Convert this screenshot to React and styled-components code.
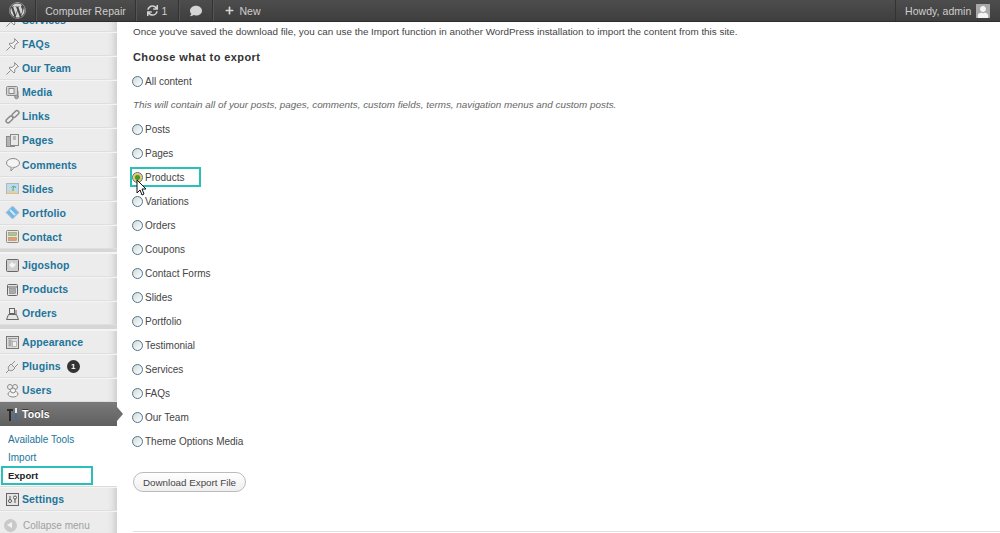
import styled, { createGlobalStyle } from 'styled-components';
import { FaWordpress, FaSync, FaComment, FaPlus, FaUser } from 'react-icons/fa';

const GlobalStyle = createGlobalStyle`
  html, body {
    margin: 0;
    padding: 0;
    height: 533px;
    overflow: hidden;
    background: #fff;
    font-family: "Liberation Sans", Arial, sans-serif;
  }
`;

const Page = styled.div`
  display: flex;
  flex-direction: column;
  width: 1000px;
  height: 533px;
  overflow: hidden;
`;

const AdminBar = styled.header`
  display: flex;
  flex: 0 0 22px;
  height: 22px;
  background: linear-gradient(#4d4d4d, #3e3e3e);
  color: #cfcfcf;
  font-size: 10.5px;
  letter-spacing: 0.05px;
  position: relative;
  z-index: 3;
  border-bottom: 1px solid #2c2c2c;
  box-sizing: border-box;
`;

const BarItem = styled.div`
  display: flex;
  align-items: center;
  justify-content: center;
  gap: ${({ $gap }) => $gap || 0}px;
  width: ${({ $w }) => $w}px;
  box-sizing: border-box;
  white-space: nowrap;
  border-right: ${({ $last }) => ($last ? '0' : '1px solid #333')};
  box-shadow: ${({ $last }) => ($last ? 'none' : '1px 0 0 #555')};
  svg { color: #d4d4d4; }
`;

const BarSpacer = styled.div`
  flex: 1;
`;

const BarAccount = styled.div`
  display: flex;
  align-items: center;
  gap: 5px;
  padding: 0 0 0 9px;
  width: 105px;
  box-sizing: border-box;
  white-space: nowrap;
  border-left: 1px solid #333;
`;

const Avatar = styled.div`
  display: flex;
  align-items: flex-end;
  justify-content: center;
  width: 14px;
  height: 14px;
  background: #a8a8a8;
  overflow: hidden;
  svg { color: #f4f4f4; }
`;

const Body = styled.div`
  display: flex;
  flex: 1;
  min-height: 0;
`;

const Sidebar = styled.nav`
  flex: 0 0 117px;
  width: 117px;
  background: #ececec;
  box-shadow: inset -8px 0 6px -5px #cccccc;
  position: relative;
  z-index: 1;
`;

const MenuRow = styled.div`
  display: flex;
  align-items: center;
  height: 24.05px;
  box-sizing: border-box;
  border-top: 1px solid #f4f4f4;
  border-bottom: 1px solid #dedede;
  padding-left: 5px;
  gap: 2px;
  font-size: 10.5px;
  font-weight: bold;
  letter-spacing: 0.1px;
  color: #21759b;
  white-space: nowrap;
  svg { flex: 0 0 15px; }
`;

const ClippedRow = styled(MenuRow)`
  margin-top: -13.8px;
`;

const ActiveRow = styled(MenuRow)`
  background: linear-gradient(#7a7a7a, #5f5f5f);
  color: #fff;
  text-shadow: 0 -1px 0 #3a3a3a;
  border: 0;
  height: 24px;
  width: 117px;
  position: relative;
  &::after {
    content: '';
    position: absolute;
    left: 117px;
    top: 5px;
    border-left: 6px solid #6d6d6d;
    border-top: 7px solid transparent;
    border-bottom: 7px solid transparent;
  }
`;

const Separator = styled.div`
  height: 3.6px;
  background: #d6d6d6;
  border-bottom: 1px solid #f4f4f4;
`;

const Badge = styled.span`
  display: inline-flex;
  align-items: center;
  justify-content: center;
  width: 13px;
  height: 13px;
  margin-left: 4px;
  border-radius: 50%;
  background: #333;
  color: #fff;
  font-size: 8px;
  letter-spacing: 0;
`;

const SubMenu = styled.div`
  display: flex;
  flex-direction: column;
  padding: 5px 0 1px;
  background: #fff;
  border-bottom: 1px solid #dcdcdc;
`;

const SubItem = styled.div`
  position: relative;
  height: 18px;
  line-height: 18px;
  padding-left: 8px;
  color: ${({ $current }) => ($current ? '#222' : '#21759b')};
  font-size: ${({ $current }) => ($current ? '9.5px' : '10px')};
  font-weight: ${({ $current }) => ($current ? 'bold' : 'normal')};
  ${({ $current }) =>
    $current &&
    `&::after {
      content: '';
      position: absolute;
      left: 1px;
      top: -1px;
      width: 92px;
      height: 19px;
      box-sizing: border-box;
      border: 2px solid #2ac0ba;
    }`}
`;

const CollapseRow = styled(MenuRow)`
  color: #a0a0a0;
  font-weight: normal;
  font-size: 10px;
  letter-spacing: 0;
  border-bottom: 0;
  gap: 6px;
  height: 27px;
  padding-left: 4px;
`;

const CollapseDot = styled.span`
  display: flex;
  align-items: center;
  justify-content: center;
  width: 13px;
  height: 13px;
  border-radius: 50%;
  background: #c9c9c9;
  &::before {
    content: '';
    border-right: 5px solid #f3f3f3;
    border-top: 3px solid transparent;
    border-bottom: 3px solid transparent;
    margin-left: -2px;
  }
`;

const Main = styled.main`
  flex: 1;
  padding: 4px 0 0 16px;
  color: #444;
  font-size: 10px;
  display: flex;
  flex-direction: column;
  min-width: 0;
`;

const Intro = styled.p`
  margin: 0;
  height: 12px;
  line-height: 12px;
  font-size: 9.87px;
  white-space: nowrap;
`;

const Heading = styled.h3`
  margin: 12px 0 5px;
  height: 14px;
  line-height: 14px;
  font-size: 11px;
  letter-spacing: 0.42px;
  font-weight: bold;
  color: #333;
`;

const Options = styled.div`
  display: flex;
  flex-direction: column;
  flex-shrink: 0;
`;

const Option = styled.label`
  position: relative;
  display: flex;
  align-items: center;
  gap: 2px;
  height: 24px;
  width: max-content;
  flex-shrink: 0;
  ${({ $marked }) =>
    $marked &&
    `&::after {
      content: '';
      position: absolute;
      left: -3px;
      top: 2px;
      width: 71px;
      height: 20px;
      box-sizing: border-box;
      border: 2px solid #2ac0ba;
    }`}
`;

const Radio = styled.span`
  box-sizing: border-box;
  width: 11px;
  height: 11px;
  margin-left: -1px;
  border-radius: 50%;
  border: 1px solid #44779f;
  background: ${({ $on }) =>
    $on ? 'radial-gradient(circle, #3e9a2c 0 2px, #f0c050 3px, #f7dd94 5px)' : 'linear-gradient(135deg, #d8d8d0, #fff)'};
`;

const Note = styled.p`
  margin: 0;
  height: 24px;
  line-height: 24px;
  font-style: italic;
  color: #666;
  font-size: 9.87px;
  white-space: nowrap;
`;

const Cursor = styled.svg`
  position: absolute;
  left: 3px;
  top: 14px;
  z-index: 2;
`;

const DownloadButton = styled.button`
  align-self: flex-start;
  flex-shrink: 0;
  margin-top: 19px;
  width: 113px;
  height: 20px;
  padding: 0;
  border: 1px solid #bbb;
  border-radius: 11px;
  background: linear-gradient(#fff, #efefef);
  color: #464646;
  font-family: inherit;
  font-size: 9.8px;
`;

const Rule = styled.hr`
  flex-shrink: 0;
  margin: 39px 0 0;
  width: 867px;
  border: 0;
  border-top: 1px solid #dfdfdf;
`;

const g = { fill: '#d4d4d4', stroke: '#8a8a8a', strokeWidth: 1 };

const icons = {
  pin: (
    <g fill="#f2f2f2" stroke="#8f8f8f">
      <path d="M9.500 1.500l4 4-1.500.5-2.500 3 .5 2-1 1-5-5 1-1 2 .5 3-2.500z" />
      <path d="M5.500 9.500L1.500 13.500" fill="none" />
    </g>
  ),
  media: (
    <g {...g}>
      <rect x="1.5" y="1.5" width="11" height="9" rx="1" />
      <rect x="4" y="3.500" width="5" height="5" fill="#efefef" />
      <circle cx="11.500" cy="12" r="1.800" fill="#aaa" />
      <path d="M13 12V6" fill="none" />
    </g>
  ),
  link: (
    <g fill="none" stroke="#8a8a8a" strokeWidth="1.5">
      <rect x="0.500" y="8.500" width="8" height="4" rx="2" transform="rotate(-45 4.500 10.500)" />
      <rect x="6.500" y="3" width="8" height="4" rx="2" transform="rotate(-45 10.500 5)" />
    </g>
  ),
  pages: (
    <g {...g}>
      <rect x="1.5" y="3.5" width="8" height="10" fill="#b4b4b4" />
      <rect x="5.5" y="1.5" width="8" height="11" fill="#e8e8e8" />
      <path d="M8 4h3M8 6h3" />
    </g>
  ),
  comment: (
    <g {...g}>
      <ellipse cx="8" cy="6" rx="6.500" ry="4.500" fill="#f4f4f4" />
      <path d="M6 10.500v3.500l3-3.500" fill="#f4f4f4" />
    </g>
  ),
  slides: (
    <g>
      <rect x="1.5" y="2.5" width="12" height="10" fill="#b8dcf2" stroke="#b5b5b5" />
      <path d="M2 12.500v-2l4-1 7 2v1z" fill="#e8cf90" />
      <path d="M8 10c0-2 0-3 1-4M6.500 6.500c1-1.500 3-1.500 4.500 0" fill="none" stroke="#5a9a4c" />
    </g>
  ),
  portfolio: (
    <g>
      <path d="M7.500 1l6.500 6.500-6.500 6.500L1 7.500z" fill="#6db8e8" stroke="#c0c0c0" />
      <path d="M5 5l5 5" stroke="#cfe9f9" strokeWidth="2" />
    </g>
  ),
  contact: (
    <g>
      <rect x="1.5" y="1.5" width="12" height="12" rx="1" fill="#eee8d0" stroke="#8a8a8a" />
      <rect x="3.5" y="3.5" width="8" height="3" fill="#a9c98c" stroke="#8a8a8a" strokeWidth=".5" />
      <rect x="3.5" y="8.5" width="8" height="3" fill="#e89a70" stroke="#8a8a8a" strokeWidth=".5" />
    </g>
  ),
  jigoshop: (
    <g>
      <rect x="1.5" y="1.5" width="12" height="12" rx="1" fill="#cfcfcf" stroke="#666" />
      <path d="M4 7l3-3 2 2 2-1-1 3-3 2z" fill="#f4f4f4" />
    </g>
  ),
  products: (
    <g>
      <rect x="2.5" y="2.5" width="10" height="11" rx="1" fill="#e4e4e4" stroke="#666" />
      <rect x="4.5" y="6.5" width="6" height="5" fill="#aaa" stroke="#777" strokeWidth=".5" />
      <path d="M3 5h9" stroke="#666" />
    </g>
  ),
  orders: (
    <g>
      <path d="M1.5 13.500l2-5h8l2 5z" fill="#e6e6e6" stroke="#666" />
      <rect x="4.5" y="2.5" width="5" height="5" fill="#eee" stroke="#666" />
      <path d="M11 4v4" stroke="#666" />
    </g>
  ),
  appearance: (
    <g>
      <rect x="1.5" y="1.5" width="12" height="12" fill="#dcdcdc" stroke="#777" />
      <rect x="3.5" y="4.5" width="3" height="7" fill="#aaa" />
      <rect x="7.5" y="6.5" width="4" height="5" fill="#f2f2f2" stroke="#888" strokeWidth=".5" />
      <path d="M3 3.500h9" stroke="#999" />
    </g>
  ),
  plugin: (
    <g fill="#e6e6e6" stroke="#8f8f8f">
      <path d="M6 5l4 4-2 2c-1.500 1-3 1-4 0s-1-2.500 0-4z" />
      <path d="M7 5l3-3M10 8l3-3M4 11l-3 3" fill="none" />
    </g>
  ),
  users: (
    <g {...g}>
      <circle cx="5" cy="4" r="2.500" fill="#eee" />
      <circle cx="10" cy="4" r="2.500" fill="#eee" />
      <ellipse cx="8" cy="11" rx="5" ry="3" fill="#f4f4f4" />
      <circle cx="8" cy="7.500" r="2.500" fill="#f4f4f4" />
    </g>
  ),
  tools: (
    <g>
      <path d="M2 2h6v2H6v10H4V4H2z" fill="#2b2b2b" />
      <path d="M10 1h2v5h-2z" fill="#e9e9e9" />
      <path d="M10 6h2v8h-2z" fill="#3b6ea5" />
    </g>
  ),
  settings: (
    <g>
      <rect x="1.5" y="1.5" width="12" height="12" fill="#e4e4e4" stroke="#666" />
      <path d="M5 4v7M10 4v7" stroke="#555" />
      <circle cx="5" cy="9" r="1.500" fill="#fff" stroke="#555" />
      <circle cx="10" cy="5.500" r="1.500" fill="#fff" stroke="#555" />
    </g>
  ),
};

const MenuIcon = ({ name }) => (
  <svg width="15" height="15" viewBox="0 0 15 15">
    {icons[name]}
  </svg>
);

const groups = [
  [
    ['FAQs', 'pin'],
    ['Our Team', 'pin'],
    ['Media', 'media'],
    ['Links', 'link'],
    ['Pages', 'pages'],
    ['Comments', 'comment'],
    ['Slides', 'slides'],
    ['Portfolio', 'portfolio'],
    ['Contact', 'contact'],
  ],
  [
    ['Jigoshop', 'jigoshop'],
    ['Products', 'products'],
    ['Orders', 'orders'],
  ],
  [
    ['Appearance', 'appearance'],
    ['Plugins', 'plugin', 1],
    ['Users', 'users'],
  ],
];

const exportTypes = [
  'Posts',
  'Pages',
  'Products',
  'Variations',
  'Orders',
  'Coupons',
  'Contact Forms',
  'Slides',
  'Portfolio',
  'Testimonial',
  'Services',
  'FAQs',
  'Our Team',
  'Theme Options Media',
];

export default function App() {
  return (
    <Page>
      <GlobalStyle />
      <AdminBar>
        <BarItem $w={36}>
          <FaWordpress size={17} />
        </BarItem>
        <BarItem $w={100}>Computer Repair</BarItem>
        <BarItem $w={43} $gap={4}>
          <FaSync size={11} />1
        </BarItem>
        <BarItem $w={34}>
          <FaComment size={12} />
        </BarItem>
        <BarItem $w={60} $gap={5} $last>
          <FaPlus size={9} />
          New
        </BarItem>
        <BarSpacer />
        <BarAccount>
          Howdy, admin
          <Avatar>
            <FaUser size={12} />
          </Avatar>
        </BarAccount>
      </AdminBar>
      <Body>
        <Sidebar>
          <ClippedRow>
            <MenuIcon name="pin" />
            Services
          </ClippedRow>
          {groups.map((rows, i) => (
            <div key={i}>
              {i > 0 && <Separator />}
              {rows.map(([label, icon, count]) => (
                <MenuRow key={label}>
                  <MenuIcon name={icon} />
                  {label}
                  {count && <Badge>{count}</Badge>}
                </MenuRow>
              ))}
            </div>
          ))}
          <ActiveRow>
            <MenuIcon name="tools" />
            Tools
          </ActiveRow>
          <SubMenu>
            <SubItem>Available Tools</SubItem>
            <SubItem>Import</SubItem>
            <SubItem $current>Export</SubItem>
          </SubMenu>
          <MenuRow>
            <MenuIcon name="settings" />
            Settings
          </MenuRow>
          <CollapseRow>
            <CollapseDot />
            Collapse menu
          </CollapseRow>
        </Sidebar>
        <Main>
          <Intro>
            Once you've saved the download file, you can use the Import function in another WordPress installation to
            import the content from this site.
          </Intro>
          <Heading>Choose what to export</Heading>
          <Options>
            <Option>
              <Radio />
              All content
            </Option>
            <Note>
              This will contain all of your posts, pages, comments, custom fields, terms, navigation menus and custom
              posts.
            </Note>
            {exportTypes.map((label) => {
              const on = label === 'Products';
              return (
                <Option key={label} $marked={on}>
                  <Radio $on={on} />
                  {label}
                  {on && (
                    <Cursor width="12" height="18" viewBox="0 0 12 18">
                      <path d="M1 1v13l3-3 2 5 2-1-2-5h4z" fill="#fff" stroke="#111" />
                    </Cursor>
                  )}
                </Option>
              );
            })}
          </Options>
          <DownloadButton>Download Export File</DownloadButton>
          <Rule />
        </Main>
      </Body>
    </Page>
  );
}
